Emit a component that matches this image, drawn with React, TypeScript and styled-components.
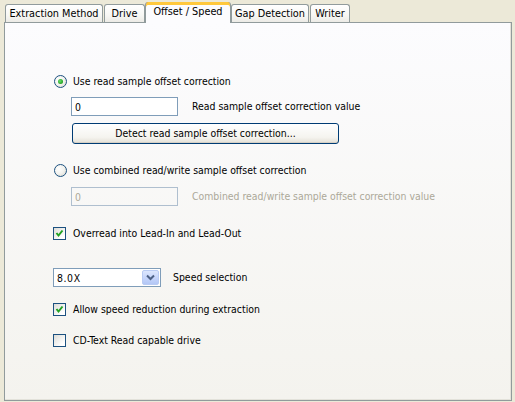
import React from "react";
import styled, { createGlobalStyle, css } from "styled-components";

const Global = createGlobalStyle`
  html, body { margin: 0; padding: 0; background: #ECE9D8; }
  body { font-family: "DejaVu Sans Condensed", "Liberation Sans", sans-serif; font-size: 10.4px; color: #000; }
`;

const Window = styled.div`
  width: 515px;
  height: 402px;
  background: #ECE9D8;
  display: flex;
  flex-direction: column;
  box-sizing: border-box;
  padding: 0 3px 1px 4px;
`;

const TabStrip = styled.div`
  height: 22px;
  display: flex;
  align-items: flex-end;
  padding-left: 1px;
  position: relative;
  z-index: 2;
`;

const Tab = styled.div<{ $w: number; $active?: boolean; $gap?: number }>`
  box-sizing: border-box;
  width: ${(p) => p.$w}px;
  margin-left: ${(p) => p.$gap ?? 0}px;
  height: 18px;
  border: 1px solid #919B9C;
  border-bottom: none;
  border-radius: 3px 3px 0 0;
  background: linear-gradient(#FFFFFF, #F7F7F4 60%, #ECEBE6);
  display: flex;
  align-items: center;
  justify-content: center;
  white-space: nowrap;
  padding-bottom: 1px;
  font-size: 10.8px;
  ${(p) =>
    p.$active &&
    css`
      height: 21px;
      margin-bottom: -1px;
      border-top: none;
      background: #FCFCFE;
      padding-bottom: 4px;
      padding-top: 1px;
      box-shadow: inset 0 3px 0 #FFC83C, inset 0 1px 0 #E68B2C;
    `}
`;

const Panel = styled.div`
  flex: 1;
  border: 1px solid #919B9C;
  background: linear-gradient(#FCFCFE, #F4F3EE);
  box-shadow: inset -1px -1px 0 #E3E2DA;
  display: flex;
  flex-direction: column;
  padding: 52px 0 0 49px;
`;

const Row = styled.div<{ $top?: number; $indent?: number }>`
  display: flex;
  align-items: center;
  margin-top: ${(p) => p.$top ?? 0}px;
  margin-left: ${(p) => p.$indent ?? 0}px;
`;

const Label = styled.span<{ $disabled?: boolean; $gap?: number }>`
  margin-left: ${(p) => p.$gap ?? 6}px;
  line-height: 13px;
  white-space: nowrap;
  color: ${(p) => (p.$disabled ? "#ACA899" : "#000")};
`;

const RadioBox = styled.span<{ $on?: boolean }>`
  box-sizing: border-box;
  width: 13px;
  height: 13px;
  border-radius: 50%;
  border: 1px solid #1C5180;
  background: radial-gradient(circle at 35% 35%, #FFFFFF 0%, #F2F2EE 50%, #D6D3C8 100%);
  display: flex;
  align-items: center;
  justify-content: center;
  flex-shrink: 0;
  &::after {
    content: "";
    display: ${(p) => (p.$on ? "block" : "none")};
    width: 5px;
    height: 5px;
    border-radius: 50%;
    background: radial-gradient(circle at 40% 40%, #6BE06B, #21A121 70%, #1A8A1A);
  }
`;

const CheckBox = styled.span`
  box-sizing: border-box;
  width: 13px;
  height: 13px;
  border: 1px solid #1C5180;
  background: linear-gradient(135deg, #DCDCD7, #FFFFFF 80%);
  display: flex;
  align-items: center;
  justify-content: center;
  flex-shrink: 0;
`;

const TextField = styled.div<{ $disabled?: boolean }>`
  box-sizing: border-box;
  width: 107px;
  height: 19px;
  border: 1px solid ${(p) => (p.$disabled ? "#AFBFCF" : "#7F9DB9")};
  background: ${(p) => (p.$disabled ? "transparent" : "#FFFFFF")};
  color: ${(p) => (p.$disabled ? "#ACA899" : "#000")};
  display: flex;
  align-items: center;
  padding-left: 3px;
  flex-shrink: 0;
`;

const PushButton = styled.div`
  box-sizing: border-box;
  width: 267px;
  height: 21px;
  border: 1px solid #003C74;
  border-radius: 3px;
  background: linear-gradient(#FFFFFF, #F5F4EF 70%, #E3E0D6);
  box-shadow: inset 0 -1px 0 #D6D0C5;
  display: flex;
  align-items: center;
  justify-content: center;
  padding-bottom: 1px;
`;

const Combo = styled.div`
  box-sizing: border-box;
  width: 108px;
  height: 19px;
  border: 1px solid #7F9DB9;
  background: #FFFFFF;
  display: flex;
  align-items: center;
  justify-content: space-between;
  padding: 0 1px 0 3px;
  flex-shrink: 0;
  letter-spacing: 0.6px;
`;

const ComboButton = styled.div`
  box-sizing: border-box;
  width: 17px;
  height: 15px;
  border-radius: 2px;
  border: 1px solid #B9CBF3;
  background: linear-gradient(#DCE6FD, #C3D3FB 60%, #B3C7F5);
  display: flex;
  align-items: center;
  justify-content: center;
`;

const Check = () => (
  <svg width="9" height="9" viewBox="0 0 9 9">
    <polyline points="1.5,4 3.5,6.5 7.5,1.5" fill="none" stroke="#21A121" strokeWidth="2" />
  </svg>
);

const Chevron = () => (
  <svg width="9" height="7" viewBox="0 0 9 7">
    <polyline points="1,1.5 4.5,5 8,1.5" fill="none" stroke="#4D6185" strokeWidth="2" />
  </svg>
);

export default function App() {
  return (
    <>
      <Global />
      <Window>
        <TabStrip>
          <Tab $w={98}>Extraction Method</Tab>
          <Tab $w={41} $gap={1}>Drive</Tab>
          <Tab $w={86} $active>Offset / Speed</Tab>
          <Tab $w={78}>Gap Detection</Tab>
          <Tab $w={40} $gap={1}>Writer</Tab>
        </TabStrip>
        <Panel>
          <Row>
            <RadioBox $on />
            <Label>Use read sample offset correction</Label>
          </Row>
          <Row $top={9} $indent={17}>
            <TextField>0</TextField>
            <Label $gap={14}>Read sample offset correction value</Label>
          </Row>
          <Row $top={7} $indent={18}>
            <PushButton>Detect read sample offset correction...</PushButton>
          </Row>
          <Row $top={20}>
            <RadioBox />
            <Label>Use combined read/write sample offset correction</Label>
          </Row>
          <Row $top={10} $indent={17}>
            <TextField $disabled>0</TextField>
            <Label $gap={14} $disabled>Combined read/write sample offset correction value</Label>
          </Row>
          <Row $top={21} $indent={-1}>
            <CheckBox><Check /></CheckBox>
            <Label $gap={7}>Overread into Lead-In and Lead-Out</Label>
          </Row>
          <Row $top={28} $indent={-1}>
            <Combo>
              <span>8.0X</span>
              <ComboButton><Chevron /></ComboButton>
            </Combo>
            <Label $gap={12}>Speed selection</Label>
          </Row>
          <Row $top={16} $indent={-1}>
            <CheckBox><Check /></CheckBox>
            <Label $gap={7}>Allow speed reduction during extraction</Label>
          </Row>
          <Row $top={18} $indent={-1}>
            <CheckBox />
            <Label $gap={7}>CD-Text Read capable drive</Label>
          </Row>
        </Panel>
      </Window>
    </>
  );
}
